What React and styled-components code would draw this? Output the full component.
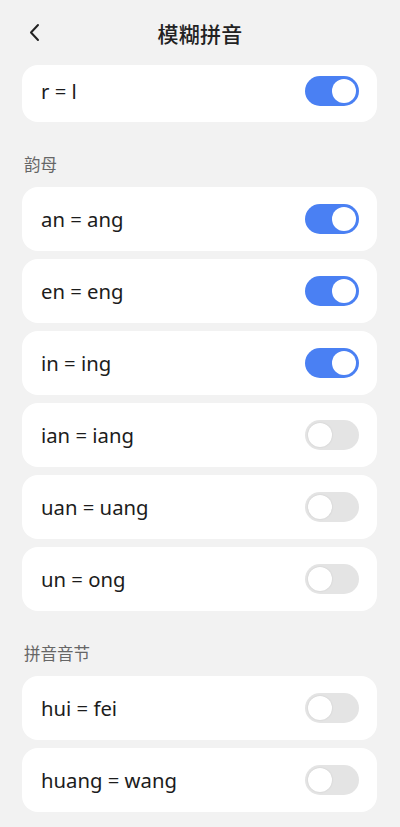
import React, { useState } from 'react';
import styled, { createGlobalStyle } from 'styled-components';

const GlobalStyle = createGlobalStyle`
  html, body {
    margin: 0;
    padding: 0;
    background: #f2f2f2;
  }
  body {
    font-family: "Noto Sans", "Noto Sans CJK SC", sans-serif;
    color: #1f1f1f;
    overflow: hidden;
  }
`

const Page = styled.div`
  width: 400px;
  height: 827px;
  background: #f2f2f2;
  overflow: hidden;
`

const Header = styled.div`
  height: 65px;
  display: flex;
  align-items: center;
  justify-content: center;
  position: relative;
`

const BackButton = styled.button`
  position: absolute;
  left: 28px;
  top: 23px;
  width: 12px;
  height: 19px;
  border: none;
  background: none;
  padding: 0;
  display: flex;
`

const Title = styled.h1`
  margin: 0;
  font-size: 21px;
  font-weight: 500;
  color: #222;
  letter-spacing: 0.3px;
  font-family: "Noto Sans CJK SC", sans-serif;
`

const List = styled.div`
  padding: 0 23px 0 22px;
`

const Section = styled.div`
  display: flex;
  flex-direction: column;
  gap: 8px;
`

const SectionLabel = styled.div`
  padding: 32px 0 5px 2px;
  font-size: 16.5px;
  line-height: 20px;
  color: #666;
  font-family: "Noto Sans CJK SC", sans-serif;
`

const Card = styled.div`
  height: ${p => p.$height || 64}px;
  box-sizing: border-box;
  background: #fff;
  border-radius: 16px;
  display: flex;
  align-items: center;
  justify-content: space-between;
  padding: 0 18px ${p => p.$lift || 0}px 19px;
`

const Label = styled.span`
  font-size: 20.3px;
  color: #1c1c1c;
`

const Track = styled.button`
  width: 54px;
  height: 30px;
  border-radius: 15px;
  border: none;
  padding: 3px;
  background: ${p => (p.$on ? '#4a80f3' : '#e4e4e4')};
  display: flex;
  justify-content: ${p => (p.$on ? 'flex-end' : 'flex-start')};
  align-items: center;
  cursor: pointer;
`

const Knob = styled.span`
  width: 24px;
  height: 24px;
  border-radius: 50%;
  background: #fff;
  box-shadow: ${p => (p.$on ? 'none' : '0 0 2px rgba(0,0,0,0.12)')};
`

const Toggle = ({ on, onClick }) => (
  <Track $on={on} onClick={onClick}>
    <Knob $on={on} />
  </Track>
)

const sections = [
  { label: '韵母', items: ['an = ang', 'en = eng', 'in = ing', 'ian = iang', 'uan = uang', 'un = ong'] },
  { label: '拼音音节', items: ['hui = fei', 'huang = wang'] },
]

export default function App() {
  const [state, setState] = useState({
    'r = l': true,
    'an = ang': true,
    'en = eng': true,
    'in = ing': true,
  })
  const flip = k => setState(s => ({ ...s, [k]: !s[k] }))

  return (
    <Page>
      <GlobalStyle />
      <Header>
        <BackButton>
          <svg width="12" height="19" viewBox="0 0 12 19">
            <path d="M10 2 L3 9.5 L10 17" fill="none" stroke="#222" strokeWidth="2" strokeLinecap="round" strokeLinejoin="round" />
          </svg>
        </BackButton>
        <Title>模糊拼音</Title>
      </Header>
      <List>
        {/* first card is partly scrolled under the header */}
        <Card $height={57} $lift={6}>
          <Label>r = l</Label>
          <Toggle on={!!state['r = l']} onClick={() => flip('r = l')} />
        </Card>
        {sections.map(sec => (
          <Section key={sec.label}>
            <SectionLabel>{sec.label}</SectionLabel>
            {sec.items.map(item => (
              <Card key={item}>
                <Label>{item}</Label>
                <Toggle on={!!state[item]} onClick={() => flip(item)} />
              </Card>
            ))}
          </Section>
        ))}
      </List>
    </Page>
  )
}
